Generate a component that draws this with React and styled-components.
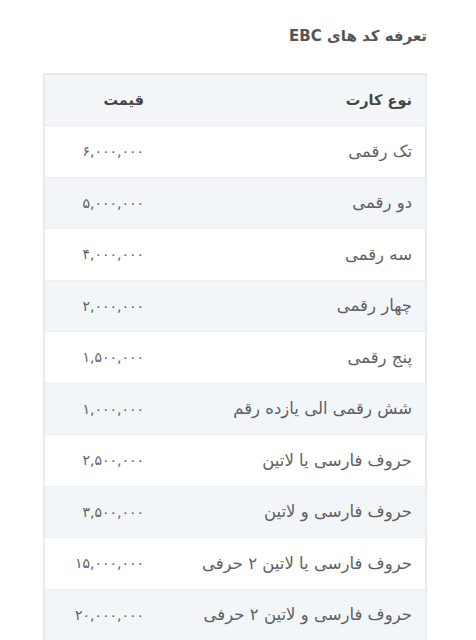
import React from 'react'
import styled, { createGlobalStyle } from 'styled-components'

const GlobalStyle = createGlobalStyle`
  html, body {
    margin: 0;
    padding: 0;
    background: #ffffff;
  }
  body {
    font-family: "DejaVu Sans", sans-serif;
    direction: rtl;
  }
`

const Page = styled.div`
  padding: 24px 49px 0 43px;
`

const Title = styled.h2`
  margin: 0 0 25px;
  font-size: 15px;
  font-weight: bold;
  color: #555;
  line-height: 24px;
`

const Table = styled.table`
  width: 100%;
  border-collapse: collapse;
  border: 2px solid #e8ebee;
`

const HeadCell = styled.th`
  background: #f3f6f9;
  color: #444;
  font-size: 14.5px;
  font-weight: bold;
  text-align: right;
  height: 50px;
  padding: 0 13px;
  border-bottom: 1px solid #e9edf0;
`

const Row = styled.tr`
  background: ${p => (p.$striped ? '#f3f6f9' : '#ffffff')};
`

const Cell = styled.td`
  height: 50.5px;
  padding: 0 13px;
  text-align: right;
  color: #5f5f5f;
  font-size: ${p => (p.$price ? '14px' : '16.5px')};
  letter-spacing: ${p => (p.$price ? '1.1px' : '0')};
  border-bottom: 1px solid #edf0f3;
  white-space: nowrap;
`

const TypeCell = styled(Cell)`
  padding-right: 13px;
`

const PriceCell = styled(Cell)`
  width: 86px;
`

const rows = [
  ['تک رقمی', '۶,۰۰۰,۰۰۰'],
  ['دو رقمی', '۵,۰۰۰,۰۰۰'],
  ['سه رقمی', '۴,۰۰۰,۰۰۰'],
  ['چهار رقمی', '۲,۰۰۰,۰۰۰'],
  ['پنج رقمی', '۱,۵۰۰,۰۰۰'],
  ['شش رقمی الی یازده رقم', '۱,۰۰۰,۰۰۰'],
  ['حروف فارسی یا لاتین', '۲,۵۰۰,۰۰۰'],
  ['حروف فارسی و لاتین', '۳,۵۰۰,۰۰۰'],
  ['حروف فارسی یا لاتین ۲ حرفی', '۱۵,۰۰۰,۰۰۰'],
  ['حروف فارسی و لاتین ۲ حرفی', '۲۰,۰۰۰,۰۰۰'],
]

const App = () => (
  <>
    <GlobalStyle />
    <Page>
      <Title>تعرفه کد های EBC</Title>
      <Table>
        <thead>
          <tr>
            <HeadCell>نوع کارت</HeadCell>
            <HeadCell>قیمت</HeadCell>
          </tr>
        </thead>
        <tbody>
          {rows.map(([type, price], i) => (
            <Row key={type} $striped={i % 2 === 1}>
              <TypeCell>{type}</TypeCell>
              <PriceCell $price>{price}</PriceCell>
            </Row>
          ))}
        </tbody>
      </Table>
    </Page>
  </>
)

export default App
